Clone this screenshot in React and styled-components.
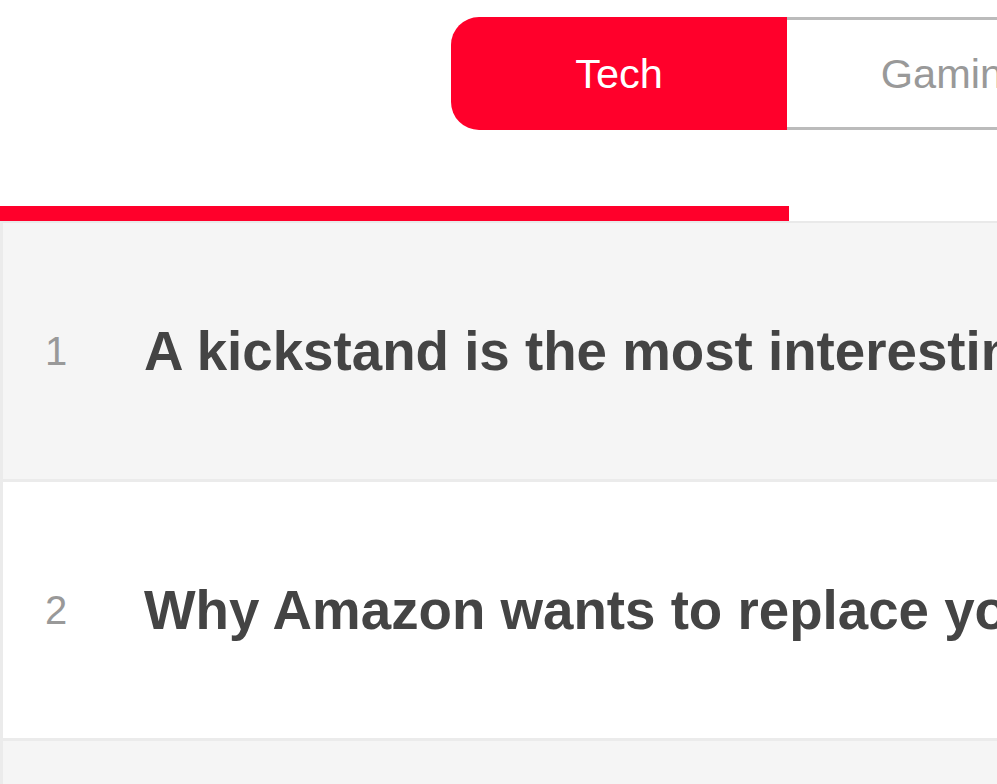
import React from 'react';
import styled, { createGlobalStyle } from 'styled-components';

const Global = createGlobalStyle`
  html, body {
    margin: 0;
    padding: 0;
    background: #fff;
    overflow: hidden;
  }
  body {
    font-family: "Liberation Sans", Arial, sans-serif;
  }
`;

const Page = styled.div`
  width: 997px;
  height: 784px;
  overflow: hidden;
`;

const TabBar = styled.div`
  display: flex;
  padding: 17px 0 0 451px;
  height: 113px;
`;

const Tab = styled.div`
  flex: 0 0 336px;
  box-sizing: border-box;
  display: flex;
  align-items: center;
  justify-content: center;
  font-size: 41.5px;
  color: ${p => (p.active ? '#fff' : '#999')};
  background: ${p => (p.active ? '#ff002b' : '#fff')};
  border-radius: ${p => (p.first ? '28px 0 0 28px' : '0')};
  border: ${p => (p.active ? 'none' : '3px solid #bbb')};
  border-left: none;
  white-space: nowrap;
`;

const Indicator = styled.div`
  margin-top: 76px;
  width: 789px;
  height: 15px;
  background: #ff002b;
`;

const List = styled.div`
  border-top: 2px solid #e9e9e9;
  border-left: 3px solid #ebebeb;
`;

const Row = styled.div`
  display: flex;
  align-items: center;
  height: 256px;
  border-bottom: 3px solid #ebebeb;
  background: ${p => (p.shaded ? '#f5f5f5' : '#fff')};
`;

const Rank = styled.div`
  flex: 0 0 141px;
  padding-left: 42px;
  box-sizing: border-box;
  font-size: 40px;
  color: #999;
`;

const Title = styled.div`
  font-size: 54.7px;
  font-weight: bold;
  color: #444;
  white-space: nowrap;
  overflow: hidden;
`;

const stories = [
  'A kickstand is the most interesting thing about the Pixel Tablet',
  'Why Amazon wants to replace your smart speaker',
  '',
];

export default function App() {
  return (
    <Page>
      <Global />
      <TabBar>
        <Tab active first>Tech</Tab>
        <Tab>Gaming</Tab>
        <Tab>Science</Tab>
      </TabBar>
      <Indicator />
      <List>
        {stories.map((s, i) => (
          <Row key={i} shaded={i % 2 === 0}>
            {s && <Rank>{i + 1}</Rank>}
            {s && <Title>{s}</Title>}
          </Row>
        ))}
      </List>
    </Page>
  );
}
